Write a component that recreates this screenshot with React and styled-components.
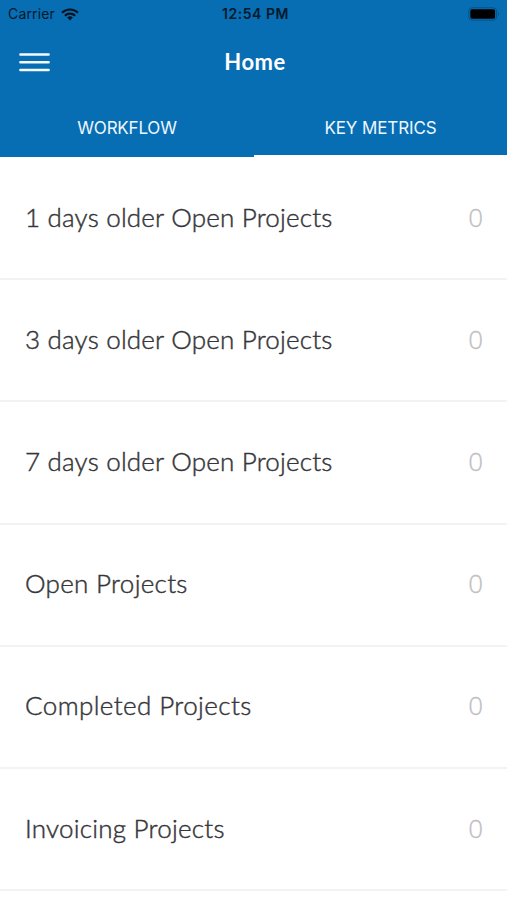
import React from "react";
import styled, { createGlobalStyle } from "styled-components";

const GlobalStyle = createGlobalStyle`
  * { box-sizing: border-box; }
  html, body { margin: 0; padding: 0; background: #fff; overflow: hidden; }
`;

const Screen = styled.main`
  width: 507px;
  height: 900px;
  overflow: hidden;
  background: #fff;
  font-family: Lato, "Open Sans", sans-serif;
`;

const Header = styled.header`
  height: 157px;
  background: #086eb3;
  display: flex;
  flex-direction: column;
`;

const StatusBar = styled.div`
  height: 28px;
  flex: none;
  display: grid;
  grid-template-columns: 1fr auto 1fr;
  align-items: center;
  padding: 0 7px 0 8px;
  color: #04192b;
  font-family: Inter, sans-serif;
  font-size: 14px;
  line-height: 28px;
`;

const Carrier = styled.div`
  display: flex;
  align-items: center;
  gap: 6px;
  letter-spacing: 0.15px;
`;

const Clock = styled.div`
  padding-left: 3px;
  font-size: 14px;
  font-weight: 600;
  letter-spacing: 0.55px;
`;

const BatterySlot = styled.div`
  display: flex;
  justify-content: flex-end;
`;

const NavBar = styled.div`
  height: 68px;
  flex: none;
  display: grid;
  grid-template-columns: 1fr auto 1fr;
  align-items: center;
  padding: 0 19px;
`;

const MenuButton = styled.button`
  display: flex;
  width: 31px;
  padding: 0;
  border: 0;
  background: none;
`;

const Title = styled.h1`
  margin: 0;
  padding: 0 0 1px 3px;
  color: #fff;
  font-size: 22px;
  font-weight: 700;
  line-height: 28px;
  letter-spacing: 0.5px;
`;

const Tabs = styled.nav`
  flex: 1;
  display: grid;
  grid-template-columns: 254px 253px;
`;

const Tab = styled.button`
  padding: 4px 0 0;
  border: 0;
  border-bottom: ${(p) => (p.$active ? "2px solid #fff" : "2px solid transparent")};
  background: none;
  color: #eef7ff;
  font-family: Inter, sans-serif;
  font-size: 17px;
  line-height: 54px;
  letter-spacing: ${(p) => p.$tracking};
`;

const List = styled.ul`
  margin: 0;
  padding: 1px 0 0;
  list-style: none;
`;

const Row = styled.li`
  height: 122.2px;
  display: flex;
  align-items: center;
  justify-content: space-between;
  padding: 0 24px 3px 25px;
  border-bottom: 2px solid #f3f3f4;
  font-size: 26px;
  line-height: 34px;
`;

const Label = styled.span`
  color: #36363a;
  font-weight: 300;
  -webkit-text-stroke: 0.45px #36363a;
  letter-spacing: ${(p) => p.$tracking};
`;

const Count = styled.span`
  color: #c0c0c2;
  font-family: "Open Sans", sans-serif;
  font-weight: 300;
  -webkit-text-stroke: 0.3px #c0c0c2;
`;

const metrics = [
  { label: "1 days older Open Projects", count: 0, tracking: "0.2px" },
  { label: "3 days older Open Projects", count: 0, tracking: "0.2px" },
  { label: "7 days older Open Projects", count: 0, tracking: "0.2px" },
  { label: "Open Projects", count: 0, tracking: "0.3px" },
  { label: "Completed Projects", count: 0, tracking: "0.4px" },
  { label: "Invoicing Projects", count: 0, tracking: "0.23px" },
];

function WifiIcon() {
  return (
    <svg width="18" height="13" viewBox="0 0 18 13" fill="none" stroke="#04121f" strokeWidth="2.2">
      <path d="M1 4.8a11.3 11.3 0 0 1 16 0" />
      <path d="M3.9 7.7a7.2 7.2 0 0 1 10.2 0" />
      <path d="M9 12.4 6.2 9.6a4 4 0 0 1 5.6 0Z" fill="#04121f" stroke="none" />
    </svg>
  );
}

function BatteryIcon() {
  return (
    <svg width="32" height="14" viewBox="0 0 32 14" fill="none">
      <rect x="0.8" y="0.8" width="27.8" height="12.4" rx="3.4" stroke="#065184" strokeWidth="1" />
      <rect x="2.3" y="2.3" width="24.8" height="9.4" rx="1.8" fill="#000" />
      <path d="M30 5v4c1.3-.5 1.3-3.5 0-4Z" fill="#065184" />
    </svg>
  );
}

function MenuIcon() {
  return (
    <svg width="31" height="20" viewBox="0 0 31 20" stroke="#f4fcff" strokeWidth="2.5" strokeLinecap="round">
      <path d="M1.4 2.5h28.2M1.4 10.2h28.2M1.4 17.9h28.2" />
    </svg>
  );
}

export default function App() {
  return (
    <Screen>
      <GlobalStyle />
      <Header>
        <StatusBar>
          <Carrier>
            Carrier
            <WifiIcon />
          </Carrier>
          <Clock>12:54 PM</Clock>
          <BatterySlot>
            <BatteryIcon />
          </BatterySlot>
        </StatusBar>
        <NavBar>
          <MenuButton aria-label="Menu">
            <MenuIcon />
          </MenuButton>
          <Title>Home</Title>
        </NavBar>
        <Tabs>
          <Tab $tracking="-0.2px">WORKFLOW</Tab>
          <Tab $active $tracking="-0.1px">KEY METRICS</Tab>
        </Tabs>
      </Header>
      <List>
        {metrics.map((m) => (
          <Row key={m.label}>
            <Label $tracking={m.tracking}>{m.label}</Label>
            <Count>{m.count}</Count>
          </Row>
        ))}
      </List>
    </Screen>
  );
}
